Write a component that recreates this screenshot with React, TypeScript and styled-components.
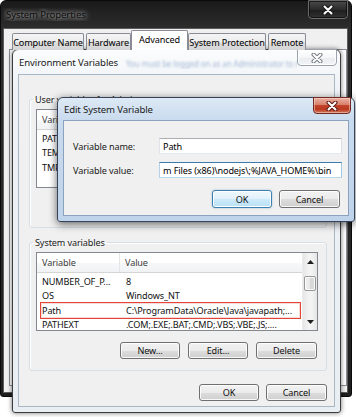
import React from "react";
import styled, { createGlobalStyle, css } from "styled-components";

const GlobalStyle = createGlobalStyle`
  * { box-sizing: border-box; }
  html, body { margin: 0; padding: 0; background: #ffffff; }
  body {
    font-family: "Noto Sans", "Open Sans", "DejaVu Sans", sans-serif;
    font-size: 9.1px;
    letter-spacing: -0.12px;
    color: #000;
  }
`;

const Desktop = styled.main`
  position: relative;
  width: 356px;
  height: 417px;
  overflow: hidden;
  background: #ffffff;
`;

type Variant = "dark" | "pale" | "active";

const Window = styled.section<{ $x: number; $y: number; $w: number; $h: number; $variant: Variant }>`
  position: absolute;
  left: ${(p) => p.$x}px;
  top: ${(p) => p.$y}px;
  width: ${(p) => p.$w}px;
  height: ${(p) => p.$h}px;
  display: flex;
  flex-direction: column;
  border-radius: 6px 6px 3px 3px;
  ${(p) =>
    p.$variant === "dark"
      ? css`
          background: linear-gradient(#1a1a1a, #2c2c2c 26px, #262626 60%, #1e1e1e);
          border: 1px solid #0a0a0a;
          padding: 0 3px 3px 2px;
        `
      : p.$variant === "pale"
      ? css`
          background: linear-gradient(#fbfcfd, #eef2f6 40px, #e9eef3);
          border: 1px solid #3c3c3c;
          padding: 0 5px 5px 5px;
          box-shadow: 0 0 5px rgba(0, 0, 0, 0.55);
        `
      : css`
          background: linear-gradient(#dde9f5, #c9dbee 22px, #bfd3ea);
          border: 1px solid #34445a;
          padding: 0 5px 5px 5px;
          box-shadow: 0 2px 9px rgba(0, 0, 0, 0.6);
        `}
`;

const TitleBar = styled.header<{ $h: number }>`
  height: ${(p) => p.$h}px;
  flex: none;
  display: flex;
  align-items: flex-start;
`;

const Title = styled.span<{ $variant: Variant }>`
  align-self: center;
  flex: 1;
  min-width: 0;
  display: flex;
  align-items: center;
  white-space: nowrap;
  overflow: hidden;
  font-size: 9.6px;
  padding-left: ${(p) => (p.$variant === "dark" ? 3 : 1)}px;
  color: ${(p) => (p.$variant === "dark" ? "#0c0c0c" : "#1a1a1a")};
  ${(p) =>
    p.$variant === "dark" &&
    css`
      text-shadow: 0 0 4px rgba(255, 255, 255, 0.8), 0 0 8px rgba(255, 255, 255, 0.5);
    `}
`;

const GlassText = styled.span`
  margin-left: 8px;
  margin-top: 3px;
  font-size: 8px;
  color: #7f9cc4;
  filter: blur(1.3px);
  opacity: 0.7;
`;

const CloseButton = styled.div<{ $variant: Variant; $w: number; $h: number; $shift: number }>`
  flex: none;
  width: ${(p) => p.$w}px;
  height: ${(p) => p.$h}px;
  margin-right: ${(p) => p.$shift}px;
  margin-top: -1px;
  display: flex;
  align-items: center;
  justify-content: center;
  border-radius: 0 0 4px 4px;
  ${(p) =>
    p.$variant === "dark"
      ? css`
          background: linear-gradient(#4a4a4a, #2b2b2b 50%, #1d1d1d 51%, #333);
          border: 1px solid #6a6a6a;
          box-shadow: inset 0 0 0 1px rgba(0, 0, 0, 0.6);
        `
      : p.$variant === "pale"
      ? css`
          background: linear-gradient(#ffffff, #f4f6f8 50%, #e8ecf0 51%, #f2f5f8);
          border: 1px solid #9aa3ad;
          box-shadow: inset 0 0 0 1px #ffffff;
        `
      : css`
          background: linear-gradient(#eab0a2, #d8806c 45%, #c2432a 50%, #b83820 75%, #d67a5d);
          border: 1px solid #6e2a1f;
          box-shadow: inset 0 0 0 1px rgba(255, 220, 210, 0.5);
        `}
`;

const CloseGlyph: React.FC<{ outline: string }> = ({ outline }) => (
  <svg width="12" height="10" viewBox="0 0 12 10">
    <path d="M2.5 1.5 L9.5 8.5 M9.5 1.5 L2.5 8.5" stroke={outline} strokeWidth="4" strokeLinecap="round" />
    <path d="M2.5 1.5 L9.5 8.5 M9.5 1.5 L2.5 8.5" stroke="#ffffff" strokeWidth="2" strokeLinecap="round" />
  </svg>
);

/* ---------- System Properties (back window) ---------- */

const SysClient = styled.div`
  flex: 1;
  display: flex;
  flex-direction: column;
  background: #f0f0f0;
  border: 1px solid #5c5c5c;
  padding: 2px 0 6px 5px;
`;

const TabRow = styled.nav`
  height: 19px;
  flex: none;
  display: flex;
  align-items: flex-end;
  gap: 2px;
  padding-left: 3px;
  position: relative;
  z-index: 1;
`;

const Tab = styled.div<{ $w: number; $active?: boolean }>`
  width: ${(p) => p.$w}px;
  height: 17px;
  display: flex;
  align-items: center;
  justify-content: center;
  white-space: nowrap;
  overflow: hidden;
  border: 1px solid #898c95;
  border-bottom: none;
  border-radius: 2px 2px 0 0;
  background: linear-gradient(#f4f4f4, #ececec 50%, #dfdfdf 51%, #d4d4d4);
  ${(p) =>
    p.$active &&
    css`
      height: 20px;
      margin: 0 -2px;
      background: #ffffff;
      padding-bottom: 2px;
    `}
`;

const TabPanel = styled.div`
  flex: 1;
  margin-top: -1px;
  background: #ffffff;
  border: 1px solid #898c95;
`;

/* ---------- Environment Variables ---------- */

const EnvClient = styled.div`
  flex: 1;
  display: flex;
  flex-direction: column;
  background: #f0f0f0;
  border: 1px solid #a9b6c3;
  padding: 18px 7px 0 10px;
`;

const Group = styled.fieldset<{ $gapAfter: number }>`
  margin: 0 0 ${(p) => p.$gapAfter}px 0;
  padding: 0 8px 11px 6px;
  border: 1px solid #d5dfe5;
  border-radius: 3px;
  box-shadow: inset 1px 1px 0 #ffffff;
  display: flex;
  flex-direction: column;
  min-width: 0;
`;

const Legend = styled.legend`
  padding: 0 2px;
  margin-left: -3px;
  line-height: 13px;
  color: #1b1b1b;
`;

const ListView = styled.div`
  margin-top: 3px;
  height: 79px;
  display: flex;
  background: #ffffff;
  border: 1px solid #828790;
`;

const ListBody = styled.div`
  flex: 1;
  min-width: 0;
  display: flex;
  flex-direction: column;
`;

const HeaderRow = styled.div`
  height: 20px;
  flex: none;
  display: grid;
  grid-template-columns: 83px 1fr;
  background: linear-gradient(#ffffff, #ffffff 50%, #f7f8fa 51%, #f1f2f4);
  border-bottom: 1px solid #d5d5d5;
  margin-bottom: 1px;
`;

const HeaderCell = styled.div<{ $divider?: boolean }>`
  display: flex;
  align-items: center;
  padding-left: 5px;
  color: #3c3c3c;
  white-space: nowrap;
  overflow: hidden;
  border-right: ${(p) => (p.$divider ? "1px solid #e3e5e8" : "none")};
`;

const DataRow = styled.div<{ $marked?: boolean }>`
  position: relative;
  height: 14.5px;
  flex: none;
  display: grid;
  grid-template-columns: 83px 1fr;
  align-items: center;
  ${(p) =>
    p.$marked &&
    css`
      &::after {
        content: "";
        position: absolute;
        left: 3px;
        right: 1px;
        top: -1px;
        bottom: -1px;
        border: 1.5px solid #e2463a;
        box-shadow: inset 0 0 0 1px rgba(240, 150, 140, 0.35);
      }
    `}
`;

const Cell = styled.div<{ $first?: boolean }>`
  padding-left: ${(p) => (p.$first ? 5 : 6)}px;
  white-space: nowrap;
  overflow: hidden;
  color: #111;
`;

const ScrollBar = styled.div`
  width: 15px;
  flex: none;
  display: flex;
  flex-direction: column;
  background: linear-gradient(90deg, #e6e6e6, #f3f3f3 40%, #f3f3f3 60%, #e6e6e6);
  border-left: 1px solid #ececec;
`;

const ScrollArrow = styled.div`
  height: 17px;
  flex: none;
  display: flex;
  align-items: center;
  justify-content: center;
`;

const ScrollThumb = styled.div`
  height: 15px;
  margin: 6px 1px 0 1px;
  border: 1px solid #979797;
  border-radius: 2px;
  background: linear-gradient(90deg, #f2f2f2, #e6e6e6 50%, #d6d6d6 51%, #dcdcdc);
  box-shadow: inset 0 0 0 1px rgba(255, 255, 255, 0.8);
`;

const ScrollSpacer = styled.div`
  flex: 1;
`;

const Arrow: React.FC<{ down?: boolean }> = ({ down }) => (
  <svg width="7" height="4" viewBox="0 0 7 4">
    <path d={down ? "M0 0 H7 L3.5 4 Z" : "M0 4 H7 L3.5 0 Z"} fill="#1e1e1e" />
  </svg>
);

const ButtonRow = styled.div<{ $top: number; $gap: number; $right: number }>`
  display: flex;
  justify-content: flex-end;
  gap: ${(p) => p.$gap}px;
  margin-top: ${(p) => p.$top}px;
  padding-right: ${(p) => p.$right}px;
`;

const Button = styled.div<{ $w: number; $default?: boolean; $h?: number }>`
  width: ${(p) => p.$w}px;
  height: ${(p) => p.$h ?? 17}px;
  display: flex;
  align-items: center;
  justify-content: center;
  border: 1px solid #707070;
  border-radius: 3px;
  background: linear-gradient(#f2f2f2, #ebebeb 50%, #dddddd 51%, #cfcfcf);
  box-shadow: inset 0 0 0 1px rgba(255, 255, 255, 0.85);
  color: #111;
  ${(p) =>
    p.$default &&
    css`
      border-color: #3c7fb1;
      background: linear-gradient(#f0f8fd, #e0f1fb 50%, #cdeafa 51%, #b9e0f5);
      box-shadow: inset 0 0 0 1px #ffffff, 0 0 2px rgba(60, 127, 177, 0.5);
    `}
`;

/* ---------- Edit System Variable ---------- */

const EditClient = styled.div`
  flex: 1;
  display: flex;
  flex-direction: column;
  background: #f0f0f0;
  border: 1px solid #8aa2bd;
  padding: 17px 6px 0 9px;
`;

const Form = styled.div`
  display: grid;
  grid-template-columns: 86px 183px;
  grid-auto-rows: 16px;
  row-gap: 8px;
  align-items: center;
`;

const Label = styled.span`
  color: #1a1a1a;
  white-space: nowrap;
`;

const Field = styled.div<{ $focused?: boolean }>`
  height: 16px;
  display: flex;
  align-items: center;
  padding: 0 3px;
  white-space: nowrap;
  overflow: hidden;
  background: #ffffff;
  border: 1px solid;
  border-color: #abadb3 #dbdfe6 #e3e9ef #e2e3ea;
  ${(p) =>
    p.$focused &&
    css`
      border-color: #3d7bad #a4c9e3 #b7d9ed #b5cfe7;
    `}
`;

const userVars = [
  { name: "PATH", value: "C:\\Users\\Admin\\AppData\\Roaming\\npm" },
  { name: "TEMP", value: "%USERPROFILE%\\AppData\\Local\\Temp" },
  { name: "TMP", value: "%USERPROFILE%\\AppData\\Local\\Temp" },
];

const systemVars = [
  { name: "NUMBER_OF_P...", value: "8" },
  { name: "OS", value: "Windows_NT" },
  { name: "Path", value: "C:\\ProgramData\\Oracle\\Java\\javapath;...", marked: true },
  { name: "PATHEXT", value: ".COM;.EXE;.BAT;.CMD;.VBS;.VBE;.JS;...." },
];

type VarRow = { name: string; value: string; marked?: boolean };

const VariableGroup: React.FC<{ label: string; rows: VarRow[]; gapAfter: number; scroll?: boolean }> = ({
  label,
  rows,
  gapAfter,
  scroll,
}) => (
  <Group $gapAfter={gapAfter}>
    <Legend>{label}</Legend>
    <ListView>
      <ListBody>
        <HeaderRow>
          <HeaderCell $divider>Variable</HeaderCell>
          <HeaderCell>Value</HeaderCell>
        </HeaderRow>
        {rows.map((r) => (
          <DataRow key={r.name} $marked={r.marked}>
            <Cell $first>{r.name}</Cell>
            <Cell>{r.value}</Cell>
          </DataRow>
        ))}
      </ListBody>
      {scroll && (
        <ScrollBar>
          <ScrollArrow>
            <Arrow />
          </ScrollArrow>
          <ScrollThumb />
          <ScrollSpacer />
          <ScrollArrow>
            <Arrow down />
          </ScrollArrow>
        </ScrollBar>
      )}
    </ListView>
    <ButtonRow $top={11} $gap={8} $right={1}>
      <Button $w={60}>New...</Button>
      <Button $w={60}>Edit...</Button>
      <Button $w={61}>Delete</Button>
    </ButtonRow>
  </Group>
);

export default function App() {
  return (
    <>
      <GlobalStyle />
      <Desktop>
        <Window $variant="dark" $x={0} $y={0} $w={352} $h={397}>
          <TitleBar $h={27}>
            <Title $variant="dark">System Properties</Title>
            <CloseButton $variant="dark" $w={40} $h={19} $shift={0}>
              <CloseGlyph outline="#1a1a1a" />
            </CloseButton>
          </TitleBar>
          <SysClient>
            <TabRow>
              <Tab $w={72}>Computer Name</Tab>
              <Tab $w={45}>Hardware</Tab>
              <Tab $w={57} $active>
                Advanced
              </Tab>
              <Tab $w={78}>System Protection</Tab>
              <Tab $w={38}>Remote</Tab>
            </TabRow>
            <TabPanel />
          </SysClient>
        </Window>

        <Window $variant="pale" $x={12} $y={49} $w={329} $h={364}>
          <TitleBar $h={24}>
            <Title $variant="pale">
              Environment Variables
              <GlassText>You must be logged on as an Administrator to make most of these changes.</GlassText>
            </Title>
            <CloseButton $variant="pale" $w={40} $h={17} $shift={-2}>
              <CloseGlyph outline="#7a7f86" />
            </CloseButton>
          </TitleBar>
          <EnvClient>
            <VariableGroup label="User variables for Admin" rows={userVars} gapAfter={8} />
            <VariableGroup label="System variables" rows={systemVars} gapAfter={0} scroll />
            <ButtonRow $top={13} $gap={7} $right={0}>
              <Button $w={60}>OK</Button>
              <Button $w={61}>Cancel</Button>
            </ButtonRow>
          </EnvClient>
        </Window>

        <Window $variant="active" $x={57} $y={97} $w={298} $h={125}>
          <TitleBar $h={22}>
            <Title $variant="active">Edit System Variable</Title>
            <CloseButton $variant="active" $w={38} $h={17} $shift={-2}>
              <CloseGlyph outline="#5a1a12" />
            </CloseButton>
          </TitleBar>
          <EditClient>
            <Form>
              <Label>Variable name:</Label>
              <Field>Path</Field>
              <Label>Variable value:</Label>
              <Field $focused>m Files (x86)\nodejs\;%JAVA_HOME%\bin</Field>
            </Form>
            <ButtonRow $top={12} $gap={7} $right={2}>
              <Button $w={60} $h={18} $default>
                OK
              </Button>
              <Button $w={61} $h={18}>
                Cancel
              </Button>
            </ButtonRow>
          </EditClient>
        </Window>
      </Desktop>
    </>
  );
}
